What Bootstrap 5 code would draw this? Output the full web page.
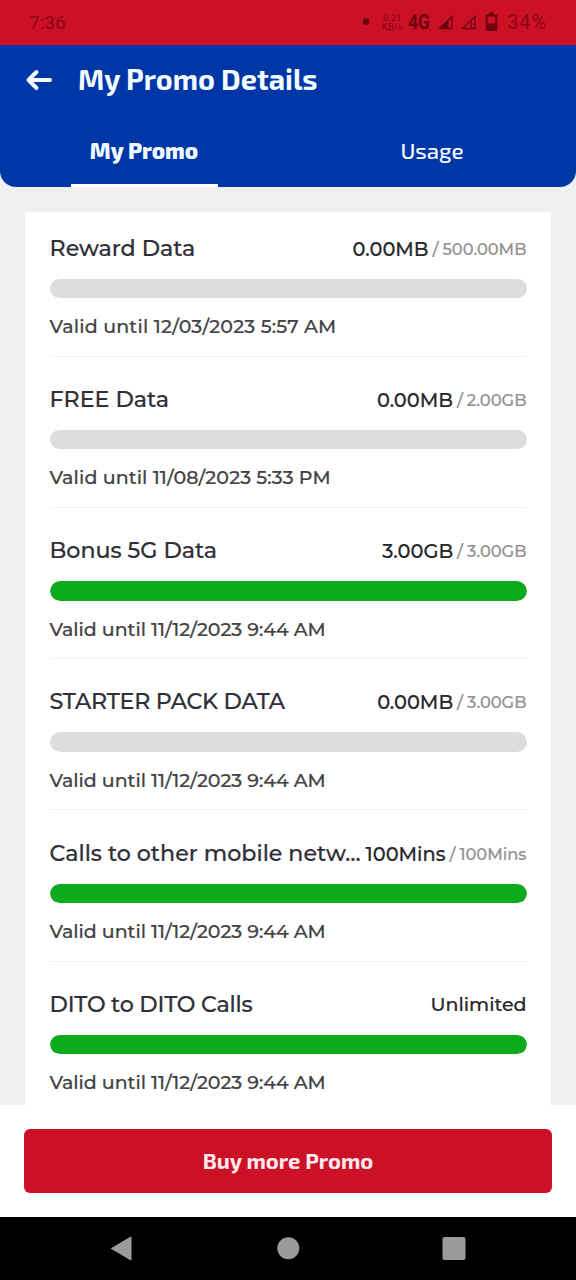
<!DOCTYPE html>
<html lang="en">
<head>
<meta charset="utf-8">
<meta name="viewport" content="width=device-width, initial-scale=1">
<title>My Promo Details</title>
<link rel="stylesheet" href="https://cdn.jsdelivr.net/npm/bootstrap@5.3.0/dist/css/bootstrap.min.css">
<style>
  body { font-family: Montserrat, Inter, sans-serif; background: #f0f0f0; font-weight: 500; }
  .screen { height: 1280px; }
  .status { height: 44.5px; background: #cc1126; color: #8c0617; font: 400 19px/1 Roboto, sans-serif; padding: 0 30px 0 29px; }
  .status-dark { color: #6d0410; }
  .notice-dot { margin-right: 11px; }
  .speed { font: 400 9.5px/1 Roboto, sans-serif; width: 22px; color: #860515; margin-right: 5px; }
  .speed span { display: block; height: 9.5px; }
  .net { font: 700 20.5px/1 Roboto, sans-serif; letter-spacing: -.3px; width: 30px; }
  .net span { display: inline-block; transform: scaleX(.86); transform-origin: left; }
  .battery { font-size: 20px; letter-spacing: .9px; margin-left: 7px; margin-right: -1px; color: #8c0617; }
  .app-head { height: 142.5px; background: #0037a7; border-radius: 0 0 16px 16px; font-family: "Exo 2", "Noto Sans", sans-serif; color: #f2fbff; }
  .head-wrap { background: #f0f0f0; }
  .title-bar { height: 69px; padding-left: 25px; gap: 25px; }
  .title-bar svg { margin-top: 1px; }
  .title-bar h1 { font-size: 28.7px; line-height: 34px; }
  .tab-row { height: 73.5px; }
  .tab-item { width: 50%; color: #f2fbff; font-size: 22.3px; line-height: 30px; padding-top: 21px; }
  .tab-item.current { font-weight: 800; }
  .tab-item.current::after { content: ""; display: block; width: 147px; height: 3.5px; margin-top: 19.5px; background: #fff; }
  .list-area { padding: 25px 25px 0; height: 918px; }
  .promo-card { border: 0; border-radius: 2px 2px 0 0; padding: 23.5px 24.5px 0; height: 100%; -webkit-text-stroke: .2px currentColor; }
  .promo { height: 151.25px; }
  .promo-top { height: 26px; line-height: 26px; margin-bottom: 17px; white-space: nowrap; }
  .promo-name { font-size: 22.2px; color: #2f2f38; }
  .promo:nth-child(4) .promo-name, .promo:nth-child(6) .promo-name { letter-spacing: -.2px; }
  .promo-left { font-size: 19.4px; color: #27272c; }
  .promo:nth-child(6) .promo-left { font-size: 19px; }
  .promo-total { font-size: 16.3px; color: #929292; }
  .slash { font-size: 17px; color: #929292; margin: 0 4px 0 4px; }
  .meter { height: 19.5px; border-radius: 10px; background: #dcdddd; }
  .meter .progress-bar { background: #0bab1b; border-radius: 10px; }
  .valid { height: 42.5px; margin-top: 16px; font-size: 19px; line-height: 26px; color: #424244; border-bottom: 1.5px solid #f1f1f1; letter-spacing: -.03px; }
  .promo:nth-child(1) .valid { letter-spacing: .19px; }
  .promo:nth-child(2) .valid { letter-spacing: .11px; }
  .buy-area { height: 112px; padding: 24px 24px 0; }
  .buy { height: 63.5px; background: #cc1126; color: #ffe9ee; border: 0; border-radius: 6px; padding: 0 0 2px; font: 700 22px/1 "Exo 2", "Noto Sans", sans-serif; }
  .buy:hover { background: #b50e20; color: #fff; }
  .sys-nav { height: 63px; background: #000; }
</style>
</head>
<body>
<div class="screen d-flex flex-column overflow-hidden">
  <div class="status d-flex align-items-center justify-content-between flex-shrink-0">
    <span>7:36</span>
    <div class="status-dark d-flex align-items-center">
      <svg class="notice-dot" width="8" height="8"><circle cx="4" cy="3.600" r="3.300" fill="currentColor"/></svg>
      <span class="speed text-center"><span>0.21</span><span>KB/s</span></span>
      <span class="net"><span>4G</span></span>
      <svg width="62" height="22" viewBox="0 0 62 22" fill="none" stroke="currentColor" stroke-width="1.300">
        <path d="M1.500 17.500L14 5.500v12z"/><path d="M1 18L10.500 9v9z" fill="currentColor" stroke="none"/>
        <path d="M24.500 17.500L37 5.500v12zM33.500 9v8"/>
        <path d="M48.700 4.500h9.600v14.500h-9.600z" stroke-width="2"/><path d="M51 1.500h5v3h-5zM48 12.500h11v7H48z" fill="currentColor" stroke="none"/>
      </svg>
      <span class="battery">34%</span>
    </div>
  </div>

  <div class="head-wrap flex-shrink-0">
    <header class="app-head">
      <div class="title-bar d-flex align-items-center">
        <svg width="28" height="24" viewBox="0 0 28 24" fill="none" stroke="#f2fbff" stroke-width="4" stroke-linecap="round" stroke-linejoin="round"><path d="M11.500 4L3.500 12l8 8M4.500 12H25"/></svg>
        <h1 class="fw-bold mb-0">My Promo Details</h1>
      </div>
      <nav class="tab-row d-flex">
        <a class="tab-item current d-flex flex-column align-items-center text-decoration-none" href="#">My Promo</a>
        <a class="tab-item d-flex flex-column align-items-center text-decoration-none" href="#">Usage</a>
      </nav>
    </header>
  </div>

  <main class="list-area overflow-hidden flex-shrink-0">
    <div class="card promo-card">
      <section class="promo flex-shrink-0">
        <div class="promo-top d-flex justify-content-between"><span class="promo-name">Reward Data</span><span class="d-flex"><span class="promo-left">0.00MB</span><span class="slash">/</span><span class="promo-total">500.00MB</span></span></div>
        <div class="progress meter"><div class="progress-bar" style="width:0%"></div></div>
        <div class="valid">Valid until 12/03/2023 5:57 AM</div>
      </section>
      <section class="promo flex-shrink-0">
        <div class="promo-top d-flex justify-content-between"><span class="promo-name">FREE Data</span><span class="d-flex"><span class="promo-left">0.00MB</span><span class="slash">/</span><span class="promo-total">2.00GB</span></span></div>
        <div class="progress meter"><div class="progress-bar" style="width:0%"></div></div>
        <div class="valid">Valid until 11/08/2023 5:33 PM</div>
      </section>
      <section class="promo flex-shrink-0">
        <div class="promo-top d-flex justify-content-between"><span class="promo-name">Bonus 5G Data</span><span class="d-flex"><span class="promo-left">3.00GB</span><span class="slash">/</span><span class="promo-total">3.00GB</span></span></div>
        <div class="progress meter"><div class="progress-bar" style="width:100%"></div></div>
        <div class="valid">Valid until 11/12/2023 9:44 AM</div>
      </section>
      <section class="promo flex-shrink-0">
        <div class="promo-top d-flex justify-content-between"><span class="promo-name">STARTER PACK DATA</span><span class="d-flex"><span class="promo-left">0.00MB</span><span class="slash">/</span><span class="promo-total">3.00GB</span></span></div>
        <div class="progress meter"><div class="progress-bar" style="width:0%"></div></div>
        <div class="valid">Valid until 11/12/2023 9:44 AM</div>
      </section>
      <section class="promo flex-shrink-0">
        <div class="promo-top d-flex justify-content-between"><span class="promo-name">Calls to other mobile netw…</span><span class="d-flex"><span class="promo-left">100Mins</span><span class="slash">/</span><span class="promo-total">100Mins</span></span></div>
        <div class="progress meter"><div class="progress-bar" style="width:100%"></div></div>
        <div class="valid">Valid until 11/12/2023 9:44 AM</div>
      </section>
      <section class="promo flex-shrink-0">
        <div class="promo-top d-flex justify-content-between"><span class="promo-name">DITO to DITO Calls</span><span class="promo-left">Unlimited</span></div>
        <div class="progress meter"><div class="progress-bar" style="width:100%"></div></div>
        <div class="valid border-0">Valid until 11/12/2023 9:44 AM</div>
      </section>
    </div>
  </main>

  <div class="buy-area bg-white flex-shrink-0">
    <button type="button" class="btn buy w-100">Buy more Promo</button>
  </div>

  <div class="sys-nav flex-shrink-0">
    <svg class="d-block" width="576" height="63" viewBox="0 0 576 63" fill="#9b9b9b">
      <path d="M110.500 31.500L130.500 19.700Q131.500 19.200 131.500 20.300V42.700Q131.500 43.700 130.500 43.200Z"/>
      <circle cx="288.300" cy="31.300" r="11"/>
      <rect x="442.500" y="20" width="23" height="23" rx="2"/>
    </svg>
  </div>
</div>
<script src="https://cdn.jsdelivr.net/npm/bootstrap@5.3.0/dist/js/bootstrap.bundle.min.js"></script>
</body>
</html>
